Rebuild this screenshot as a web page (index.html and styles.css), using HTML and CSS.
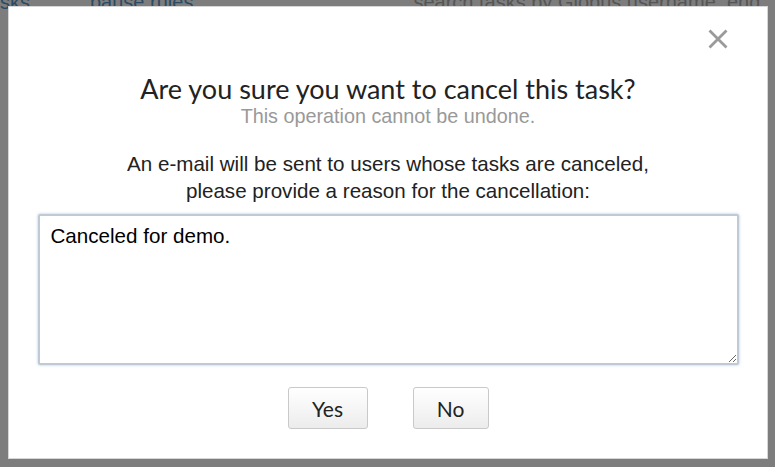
FILE: index.html
```html
<!DOCTYPE html>
<html>
<head>
<meta charset="utf-8">
<link rel="stylesheet" href="styles.css">
</head>
<body>
<div class="page">
  <div class="page-top">
    <span class="tab">sks</span>
    <span class="tab link">pause rules</span>
    <span class="search">search tasks by Globus username, end</span>
  </div>
</div>
<div class="overlay">
  <div class="modal">
    <button class="close" aria-label="Close">
      <svg width="20" height="20" viewBox="0 0 20 20"><path d="M1.5 1.5L18.5 18.5M18.5 1.5L1.5 18.5" stroke="#9a9a9a" stroke-width="2.8" fill="none"/></svg>
    </button>
    <h1 class="title">Are you sure you want to cancel this task?</h1>
    <p class="subtitle">This operation cannot be undone.</p>
    <p class="info">An e-mail will be sent to users whose tasks are canceled,<br>please provide a reason for the cancellation:</p>
    <textarea class="reason">Canceled for demo.</textarea>
    <div class="actions">
      <button class="btn yes">Yes</button>
      <button class="btn no">No</button>
    </div>
  </div>
</div>
</body>
</html>
```
FILE: styles.css
```css
html, body {
  margin: 0;
  padding: 0;
  width: 775px;
  height: 467px;
  overflow: hidden;
}
body {
  background: #7d7d7d;
  font-family: "Liberation Sans", Arial, sans-serif;
  position: relative;
}
.page {
  height: 467px;
}
.page-top {
  display: flex;
  gap: 60px;
  color: #2d4a63;
  font-size: 20px;
  line-height: 20px;
  margin-top: -8px;
}
.search { margin-left: 160px; color: #555; }
.overlay {
  position: absolute;
  inset: 0;
  display: flex;
  align-items: flex-start;
  justify-content: flex-start;
  padding: 6px 0 0 8px;
}
.modal {
  position: relative;
  box-sizing: border-box;
  width: 760px;
  height: 453px;
  background: #fff;
  border: 1px solid #d6d6d6;
  padding: 67px 29px 0 29px;
  display: flex;
  flex-direction: column;
  align-items: center;
}
.close {
  position: absolute;
  top: 22px;
  right: 39px;
  border: 0;
  background: none;
  padding: 0;
  width: 20px;
  height: 20px;
  cursor: pointer;
}
.close svg { display: block; }
.title {
  margin: 0;
  font-family: Lato, "Open Sans", sans-serif;
  font-weight: 400;
  font-size: 27px;
  line-height: 30px;
  color: #222;
  white-space: nowrap;
}
.subtitle {
  margin: 1px 0 0 0;
  font-size: 19.8px;
  line-height: 22px;
  color: #999;
}
.info {
  margin: 22.5px 0 0 0;
  font-size: 20.6px;
  line-height: 27px;
  color: #222;
  text-align: center;
  white-space: nowrap;
}
.reason {
  box-sizing: border-box;
  flex: none;
  margin: 10.5px 0 0 0;
  width: 701px;
  height: 151px;
  border: 2px solid #bfcad5;
  border-radius: 2px;
  box-shadow: 0 0 3px rgba(120, 160, 210, 0.6);
  padding: 7px 11px;
  font-family: "Liberation Sans", Arial, sans-serif;
  font-size: 20.6px;
  line-height: 26px;
  color: #000;
  resize: both;
  outline: none;
}
.actions {
  display: flex;
  gap: 45px;
  margin-top: 22px;
}
.btn {
  height: 42px;
  border: 1px solid #c9c9c9;
  border-radius: 3px;
  background: linear-gradient(#ffffff, #ececec);
  font-family: Lato, "Open Sans", sans-serif;
  font-size: 21px;
  color: #222;
  padding: 0;
  cursor: pointer;
}
.yes { width: 80px; }
.no { width: 76px; }
```
